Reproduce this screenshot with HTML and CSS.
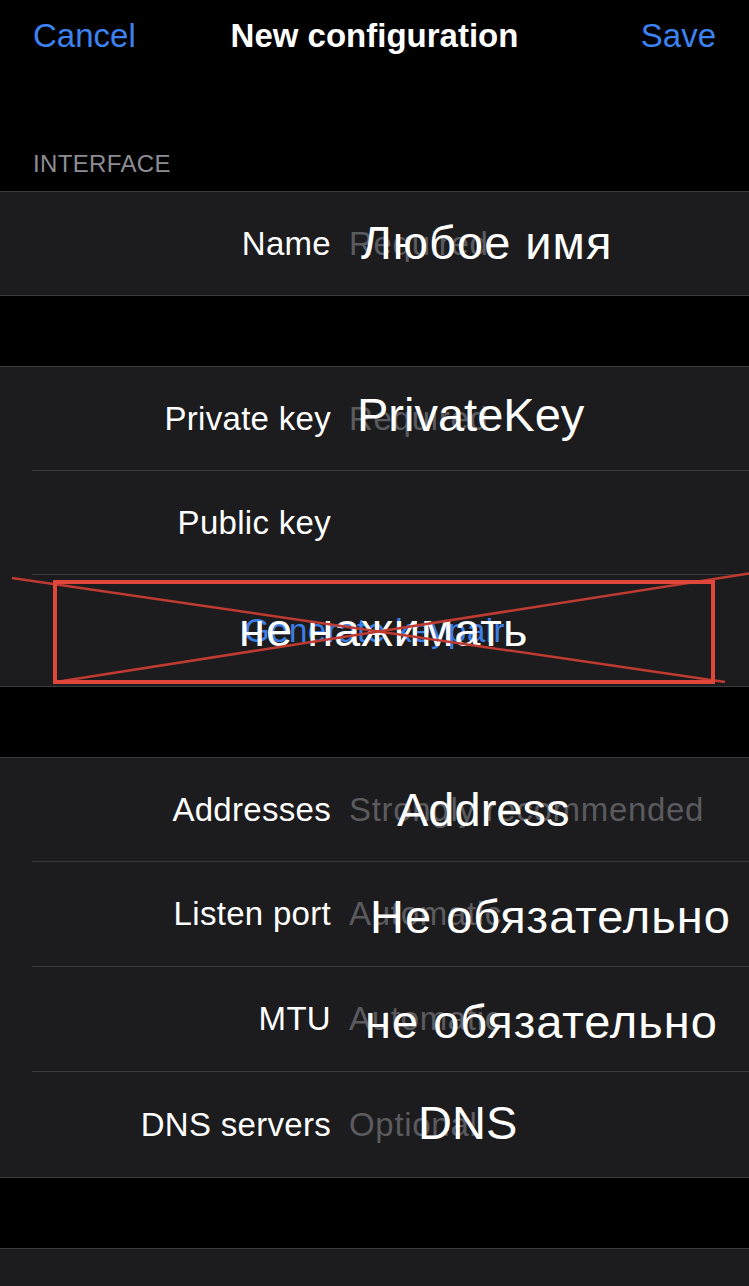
FILE: index.html
```html
<!DOCTYPE html>
<html>
<head>
<meta charset="utf-8">
<link rel="stylesheet" href="styles.css">
</head>
<body>
<div class="page">
  <header class="nav">
    <span class="nav-btn nav-left">Cancel</span>
    <span class="nav-title">New configuration</span>
    <span class="nav-btn nav-right">Save</span>
  </header>

  <div class="section-title">INTERFACE</div>

  <section class="group">
    <div class="row row-first">
      <div class="row-inner last">
        <span class="label">Name</span>
        <span class="placeholder">Required</span>
      </div>
      <span class="note cyr note-name">Любое имя</span>
    </div>
  </section>

  <section class="group">
    <div class="row">
      <div class="row-inner">
        <span class="label">Private key</span>
        <span class="placeholder">Required</span>
      </div>
      <span class="note note-priv">PrivateKey</span>
    </div>
    <div class="row">
      <div class="row-inner">
        <span class="label">Public key</span>
      </div>
    </div>
    <div class="row row-action">
      <div class="row-inner last action">
        <span class="action-text">Generate keypair</span>
      </div>
      <span class="note cyr note-gen">не нажимать</span>
    </div>
  </section>

  <section class="group">
    <div class="row">
      <div class="row-inner">
        <span class="label">Addresses</span>
        <span class="placeholder">Strongly recommended</span>
      </div>
      <span class="note note-addr">Address</span>
    </div>
    <div class="row row-tall">
      <div class="row-inner">
        <span class="label">Listen port</span>
        <span class="placeholder">Automatic</span>
      </div>
      <span class="note cyr note-port">Не обязательно</span>
    </div>
    <div class="row row-tall">
      <div class="row-inner">
        <span class="label">MTU</span>
        <span class="placeholder">Automatic</span>
      </div>
      <span class="note cyr note-mtu">не обязательно</span>
    </div>
    <div class="row row-tall">
      <div class="row-inner last">
        <span class="label">DNS servers</span>
        <span class="placeholder">Optional</span>
      </div>
      <span class="note note-dns">DNS</span>
    </div>
  </section>

  <section class="group group-tail"></section>

  <svg class="cross" width="749" height="1286" viewBox="0 0 749 1286">
    <line x1="12" y1="578" x2="725" y2="682" class="cross-line"/>
    <line x1="62" y1="681" x2="752" y2="573" class="cross-line"/>
    <rect x="55" y="582" width="658" height="100" class="cross-box"/>
  </svg>
</div>
</body>
</html>
```

FILE: styles.css
```css
html, body {
  margin: 0;
  padding: 0;
  background: #000;
}

.page {
  position: relative;
  width: 749px;
  min-height: 1286px;
  overflow: hidden;
  font-family: "Liberation Sans", Arial, sans-serif;
  color: #fff;
}

.nav {
  height: 72px;
  display: grid;
  grid-template-columns: 1fr auto 1fr;
  align-items: center;
  padding: 0 33px;
  font-size: 33px;
  line-height: 38px;
}

.nav-btn {
  color: #3c82f0;
}

.nav-left {
  justify-self: start;
}

.nav-right {
  justify-self: end;
}

.nav-title {
  font-weight: bold;
  color: #fff;
}

.section-title {
  margin-top: 78px;
  padding: 0 33px 13px;
  font-size: 24px;
  line-height: 28px;
  letter-spacing: 0.35px;
  color: #8d8d93;
}

.group {
  background: #1c1c1e;
  border-top: 1px solid #3a3a3c;
  border-bottom: 1px solid #3a3a3c;
  margin-bottom: 70px;
}

.row {
  position: relative;
  padding-left: 32px;
}

.row-inner {
  height: 104px;
  box-sizing: border-box;
  border-bottom: 1px solid #3a3a3c;
  display: flex;
  align-items: center;
  font-size: 33px;
}

.row-first .row-inner {
  height: 103px;
}

.row-tall .row-inner {
  height: 105px;
}

.row-inner.last {
  border-bottom: none;
}

.row-action .row-inner {
  height: 111px;
}

.label {
  width: 299px;
  flex: none;
  text-align: right;
  letter-spacing: 0.3px;
  color: #fff;
}

.placeholder {
  margin-left: 18px;
  color: #5b5b5f;
  letter-spacing: 0.7px;
  white-space: nowrap;
}

.action {
  justify-content: center;
  padding-right: 32px;
}

.action-text {
  color: #3a7fe8;
  letter-spacing: 0.5px;
}

.note {
  position: absolute;
  font-size: 47px;
  line-height: 47px;
  color: #fff;
  white-space: nowrap;
}

.note.cyr {
  letter-spacing: 1px;
}

.note-name { left: 361px; top: 27px; }
.note-priv { left: 357px; top: 24px; }
.note-gen  { left: 239px; top: 31px; }
.note-addr { left: 397px; top: 28px; }
.note-port { left: 370px; top: 31px; }
.note-mtu  { left: 365px; top: 31px; }
.note-dns  { left: 418px; top: 27px; }

.group-tail {
  height: 40px;
  border-bottom: none;
  margin-bottom: 0;
}

.cross {
  position: absolute;
  left: 0;
  top: 0;
  pointer-events: none;
}

.cross-line {
  stroke: #bf3a30;
  stroke-width: 2.5;
}

.cross-box {
  fill: none;
  stroke: #e0473a;
  stroke-width: 4;
}
```
